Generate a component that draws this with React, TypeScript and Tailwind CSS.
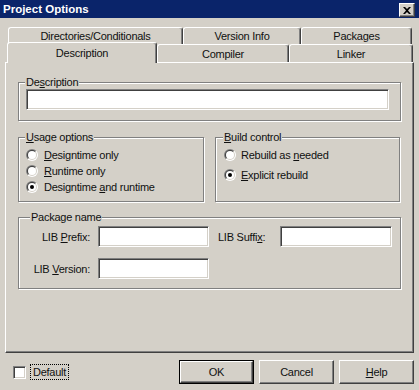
import React from 'react';

function Radio({ checked }: { checked?: boolean }) {
  return (
    <svg width="12" height="12" viewBox="0 0 12 12" className="shrink-0">
      <defs>
        <clipPath id="rtl"><polygon points="0,0 12,0 0,12" /></clipPath>
        <clipPath id="rbr"><polygon points="12,0 12,12 0,12" /></clipPath>
      </defs>
      <circle cx="6" cy="6" r="6" fill="#808080" clipPath="url(#rtl)" />
      <circle cx="6" cy="6" r="6" fill="#ffffff" clipPath="url(#rbr)" />
      <circle cx="6" cy="6" r="5" fill="#404040" clipPath="url(#rtl)" />
      <circle cx="6" cy="6" r="5" fill="#d4d0c8" clipPath="url(#rbr)" />
      <circle cx="6" cy="6" r="4" fill="#ffffff" />
      {checked && <circle cx="6" cy="6" r="2" fill="#000000" />}
    </svg>
  );
}

const tab =
  'flex items-center justify-center bg-[#d4d0c8] border-t border-l border-r border-t-white border-l-white border-r-[#404040] rounded-t-[3px] shadow-[inset_-1px_0_0_#808080]';
const sunken =
  'bg-white border border-t-[#808080] border-l-[#808080] border-b-white border-r-white shadow-[inset_1px_1px_0_#404040,inset_-1px_-1px_0_#d4d0c8]';
const raised =
  'flex items-center justify-center bg-[#d4d0c8] border border-t-white border-l-white border-r-[#404040] border-b-[#404040] shadow-[inset_-1px_-1px_0_#808080]';
const group = 'relative border border-[#808080] shadow-[inset_1px_1px_0_#fff,1px_1px_0_#fff]';
const legend = 'absolute top-[-8px] bg-[#d4d0c8] px-[1px] leading-[14px]';

export default function App() {
  return (
    <div className="w-[419px] h-[390px] overflow-hidden bg-[#d4d0c8] text-[#101010] text-[11px] tracking-[-0.25px] leading-[14px] font-['Liberation_Sans',Arial,sans-serif] flex flex-col">
      {/* title bar */}
      <div className="h-[18px] bg-[#0a246a] flex justify-between shrink-0">
        <div className="text-white font-bold text-[11.5px] tracking-normal pl-[3px] pt-[2px]">Project Options</div>
        <div className={`${raised} w-[16px] h-[14px] mt-[3px] mr-[4px]`}>
          <svg width="8" height="7" viewBox="0 0 8 7">
            <path d="M0 0h2l2 2 2-2h2L5 3.5 8 7H6L4 5 2 7H0l3-3.5z" fill="#000" />
          </svg>
        </div>
      </div>

      {/* tabs */}
      <div className="flex ml-[8px] mt-[9px] h-[17px]">
        <div className={`${tab} w-[175px]`}>Directories/Conditionals</div>
        <div className={`${tab} w-[118px]`}>Version Info</div>
        <div className={`${tab} w-[111px]`}>Packages</div>
      </div>
      <div className="flex items-end ml-[7px] h-[18px]">
        <div className={`${tab} relative z-10 w-[150px] h-[21px] -mb-[1px] pb-[1px]`}>Description</div>
        <div className={`${tab} w-[132px] h-[18px]`}>Compiler</div>
        <div className={`${tab} w-[124px] h-[18px]`}>Linker</div>
      </div>

      {/* page */}
      <div className="ml-[5px] w-[409px] h-[291px] shrink-0 border border-t-white border-l-white border-r-[#404040] border-b-[#404040] shadow-[inset_-1px_-1px_0_#808080] pl-[12px] pt-[19px] flex flex-col">
        <div className={`${group} w-[383px] h-[39px] pl-[7px] pt-[6px]`}>
          <span className={`${legend} left-[6px]`}>
            De<span className="underline">s</span>cription
          </span>
          <div className={`${sunken} w-[363px] h-[21px]`} />
        </div>

        <div className="flex gap-[11px] mt-[16px]">
          <div className={`${group} w-[186px] h-[65px] pl-[7px] pt-[9px] flex flex-col`}>
            <span className={`${legend} left-[6px]`}>
              <span className="underline">U</span>sage options
            </span>
            <div className="flex items-center gap-[6px] h-[16px]">
              <Radio />
              <span><span className="underline">D</span>esigntime only</span>
            </div>
            <div className="flex items-center gap-[6px] h-[16px]">
              <Radio />
              <span><span className="underline">R</span>untime only</span>
            </div>
            <div className="flex items-center gap-[6px] h-[16px]">
              <Radio checked />
              <span>Designtime <span className="underline">a</span>nd runtime</span>
            </div>
          </div>
          <div className={`${group} w-[185px] h-[65px] pl-[8px] pt-[7px] flex flex-col`}>
            <span className={`${legend} left-[7px]`}>
              <span className="underline">B</span>uild control
            </span>
            <div className="flex items-center gap-[5px] h-[20px]">
              <Radio />
              <span>Rebuild as <span className="underline">n</span>eeded</span>
            </div>
            <div className="flex items-center gap-[5px] h-[20px]">
              <Radio checked />
              <span><span className="underline">E</span>xplicit rebuild</span>
            </div>
          </div>
        </div>

        <div className={`${group} w-[383px] h-[72px] mt-[15px] pt-[8px] flex flex-col gap-[11px]`}>
          <span className={`${legend} left-[11px]`}>Package name</span>
          <div className="flex items-center">
            <span className="w-[71px] text-right">
              LIB <span className="underline">P</span>refix:
            </span>
            <div className={`${sunken} ml-[8px] w-[111px] h-[21px]`} />
            <span className="w-[62px] ml-[9px]">
              LIB Suffi<span className="underline">x</span>:
            </span>
            <div className={`${sunken} w-[112px] h-[21px]`} />
          </div>
          <div className="flex items-center">
            <span className="w-[71px] text-right">
              LIB <span className="underline">V</span>ersion:
            </span>
            <div className={`${sunken} ml-[8px] w-[111px] h-[21px]`} />
          </div>
        </div>
      </div>

      {/* bottom row */}
      <div className="flex items-start mt-[7px]">
        <div className="flex items-center ml-[13px] mt-[4px]">
          <div className={`${sunken} w-[13px] h-[13px]`} />
          <span className="ml-[4px] px-[2px] border border-dotted border-black leading-[14px]">Default</span>
        </div>
        <div className="ml-auto mr-[5px] flex gap-[5px]">
          <div className="border border-black">
            <div className={`${raised} w-[73px] h-[22px]`}>OK</div>
          </div>
          <div className={`${raised} w-[75px] h-[24px]`}>Cancel</div>
          <div className={`${raised} w-[75px] h-[24px]`}>
            <span><span className="underline">H</span>elp</span>
          </div>
        </div>
      </div>
    </div>
  );
}
